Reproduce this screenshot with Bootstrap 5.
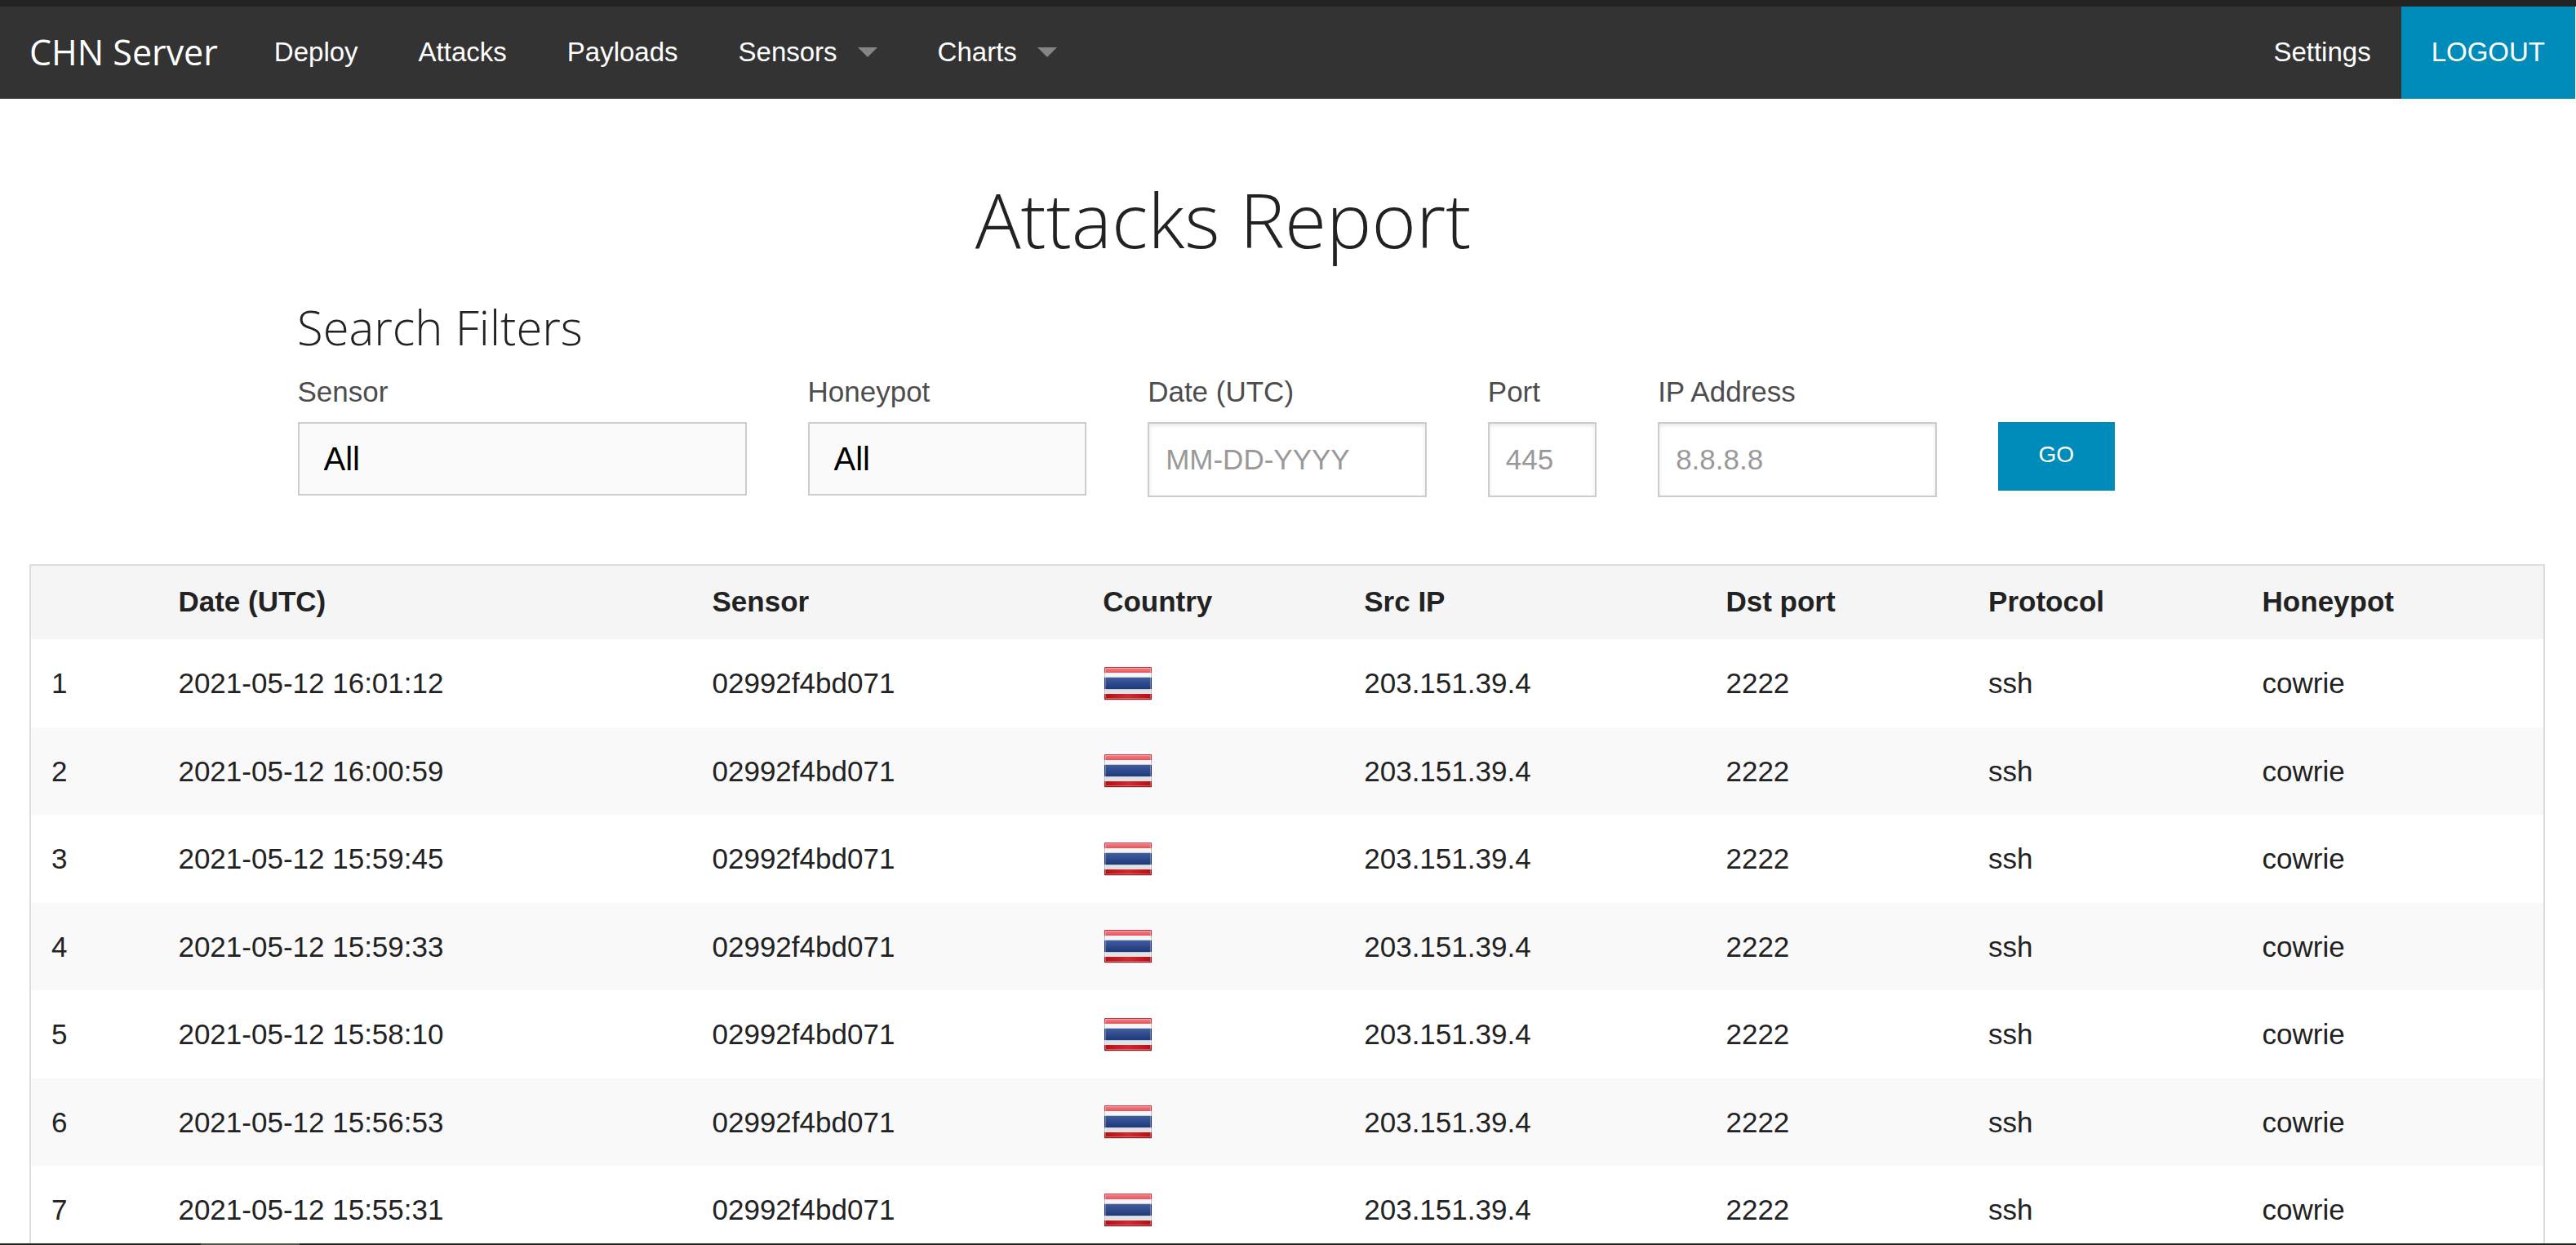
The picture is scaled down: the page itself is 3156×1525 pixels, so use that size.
<!DOCTYPE html>
<html lang="en">
<head>
<meta charset="utf-8">
<meta name="viewport" content="width=device-width, initial-scale=1">
<title>CHN Server - Attacks Report</title>
<link href="https://cdn.jsdelivr.net/npm/bootstrap@5.3.0/dist/css/bootstrap.min.css" rel="stylesheet">
<style>
  body { font-family: "Liberation Sans", Arial, sans-serif; font-size: 35px; color: #222; background: #fff; height: 100vh; overflow: hidden; }
  .page-body { padding-right: 2px; }
  .top-strip { height: 8px; background: #222; }
  .chn-nav { background: #333; --bs-navbar-padding-y: 0px; --bs-navbar-padding-x: 0px; margin-right: 1px; padding-bottom: 1px; font-size: 33px; line-height: 112px; }
  .chn-nav .navbar-brand { font-family: "Open Sans", sans-serif; font-size: 43px; line-height: 112px; color: #fff; padding: 0 32px 0 36px; margin: 0; }
  .chn-nav .navbar-nav .nav-link { color: #fff; padding: 0 37px; line-height: 112px; }
  .chn-nav .dropdown-toggle { display: flex; align-items: center; }
  .chn-nav .dropdown-toggle::after { margin-left: 25px; border-top: 12px solid #858585; border-left: 12px solid transparent; border-right: 12px solid transparent; border-bottom: 0; }
  .chn-nav .navbar-nav .logout { background: #008cba; margin-bottom: -1px; padding-bottom: 1px; }
  .filters { max-width: 2500px; padding: 83px 0 0; }
  .filters .row { --bs-gutter-x: 75px; margin: 0; }
  .report-title, .filters-title { font-family: "Open Sans", sans-serif; font-weight: 300; color: #222; }
  .report-title { font-size: 93px; line-height: 128px; margin: 0 0 29px; padding-right: 157px; }
  .filters-title { font-size: 58px; line-height: 80px; margin: 0 0 13px; padding: 0 37px; }
  .form-label { font-size: 35px; line-height: 52px; color: #4d4d4d; margin: 0 0 11px; }
  .form-select, .form-control { border: 2px solid #ccc; border-radius: 0; }
  .form-select { height: 90px; font-size: 40px; line-height: 60px; color: #000; background: #fafafa; padding: 0 30px; }
  .form-control { height: 92px; font-size: 35px; padding: 0 20px; box-shadow: inset 0 2px 5px rgba(0,0,0,.1); }
  .form-control::placeholder { color: #999; opacity: 1; }
  .go-btn { width: 143px; height: 84px; padding: 0 0 4px; margin-top: 63px; border: 0; border-radius: 0; background: #008cba; color: #fff; font-size: 28px; line-height: 40px; }
  .report-table { margin: 82px 36px 0; border: 2px solid #ddd; }
  .report-table .table { --bs-table-color: #222; margin: 0; table-layout: fixed; line-height: 45px; vertical-align: middle; }
  .report-table th, .report-table td { border: 0; padding: 0 25px 1px; height: 108px; vertical-align: middle; }
  .report-table tbody tr:nth-child(even) td { height: 107px; background: #f9f9f9; }
  .report-table thead th { height: 90px; padding-bottom: 4px; background: #f5f5f5; }
  .c-num { width: 5.05%; } .c-date { width: 21.25%; } .c-sensor { width: 15.55%; } .c-country { width: 10.4%; }
  .c-src { width: 14.4%; } .c-dst { width: 10.45%; } .c-proto { width: 10.9%; }
  .flag { width: 62px; height: 44px; display: block; }
  .taskbar-edge { height: 2px; background: linear-gradient(90deg, transparent 246px, #4e544c 246px, #4e544c 367px, transparent 367px), #20261f; }
</style>
</head>
<body>
<svg width="0" height="0" class="position-absolute" aria-hidden="true">
  <defs>
    <linearGradient id="g-top" x1="0" y1="0" x2="0" y2="1"><stop offset="0" stop-color="#f08a8f"/><stop offset="1" stop-color="#e8525b"/></linearGradient>
    <linearGradient id="g-blue" x1="0" y1="0" x2="0" y2="1"><stop offset="0" stop-color="#425d9c"/><stop offset="1" stop-color="#1d387c"/></linearGradient>
    <linearGradient id="g-red"><stop offset="0" stop-color="#b80d13"/><stop offset=".5" stop-color="#cf2b31"/><stop offset="1" stop-color="#b80d13"/></linearGradient>
    <symbol id="thai" viewBox="0 0 62 44">
      <rect x="2" y="3" width="58" height="40" fill="#000" opacity=".14"/>
      <rect x="2" y="2" width="58" height="40" fill="#f5f5f5"/>
      <rect x="2" y="2" width="58" height="7" fill="url(#g-top)"/>
      <rect x="2" y="15" width="58" height="14" fill="url(#g-blue)"/>
      <rect x="2" y="29" width="58" height="6" fill="#e2e2e2"/>
      <rect x="2" y="35" width="58" height="7" fill="url(#g-red)"/>
      <path d="M2 14.5H60M2 29.5H60" stroke="#c5cbd6"/>
      <path d="M2.5 9V2.5H59.5V9" fill="none" stroke="#c9303a"/>
      <path d="M2.5 15V29M59.5 15V29" stroke="#132c70"/>
      <path d="M2.5 9V15M59.5 9V15M2.5 29V35M59.5 29V35" stroke="#bbb"/>
      <path d="M2.5 35V41.5H59.5V35" fill="none" stroke="#96191d"/>
      <rect x="3.5" y="3.5" width="55" height="37" fill="none" stroke="#fff" opacity=".3"/>
    </symbol>
  </defs>
</svg>
<div class="top-strip"></div>
<nav class="navbar navbar-expand chn-nav" aria-label="Main">
  <a class="navbar-brand" href="#">CHN Server</a>
  <ul class="navbar-nav">
    <li class="nav-item"><a class="nav-link" href="#">Deploy</a></li>
    <li class="nav-item"><a class="nav-link" href="#">Attacks</a></li>
    <li class="nav-item"><a class="nav-link" href="#">Payloads</a></li>
    <li class="nav-item dropdown"><a class="nav-link dropdown-toggle" href="#">Sensors</a></li>
    <li class="nav-item dropdown"><a class="nav-link dropdown-toggle" href="#">Charts</a></li>
  </ul>
  <ul class="navbar-nav ms-auto">
    <li class="nav-item"><a class="nav-link" href="#">Settings</a></li>
    <li class="nav-item"><a class="nav-link logout" href="#">LOGOUT</a></li>
  </ul>
</nav>
<main class="page-body">
  <section class="container-fluid filters">
    <h1 class="report-title text-center">Attacks Report</h1>
    <h2 class="filters-title">Search Filters</h2>
    <form class="row align-items-start">
      <div class="col-3"><label class="form-label d-block" for="sensor">Sensor</label><select class="form-select" id="sensor"><option>All</option></select></div>
      <div class="col-2"><label class="form-label d-block" for="honeypot">Honeypot</label><select class="form-select" id="honeypot"><option>All</option></select></div>
      <div class="col-2"><label class="form-label d-block" for="date">Date (UTC)</label><input class="form-control" id="date" type="text" placeholder="MM-DD-YYYY"></div>
      <div class="col-1"><label class="form-label d-block" for="port">Port</label><input class="form-control" id="port" type="text" placeholder="445"></div>
      <div class="col-2"><label class="form-label d-block" for="ip">IP Address</label><input class="form-control" id="ip" type="text" placeholder="8.8.8.8"></div>
      <div class="col-2"><button class="btn go-btn" type="button">GO</button></div>
    </form>
  </section>
  <div class="report-table">
    <table class="table">
      <colgroup><col class="c-num"><col class="c-date"><col class="c-sensor"><col class="c-country"><col class="c-src"><col class="c-dst"><col class="c-proto"><col></colgroup>
      <thead><tr><th></th><th>Date (UTC)</th><th>Sensor</th><th>Country</th><th>Src IP</th><th>Dst port</th><th>Protocol</th><th>Honeypot</th></tr></thead>
      <tbody>
        <tr><td>1</td><td>2021-05-12 16:01:12</td><td>02992f4bd071</td><td><svg class="flag" role="img" aria-label="TH"><use href="#thai"/></svg></td><td>203.151.39.4</td><td>2222</td><td>ssh</td><td>cowrie</td></tr>
        <tr><td>2</td><td>2021-05-12 16:00:59</td><td>02992f4bd071</td><td><svg class="flag" role="img" aria-label="TH"><use href="#thai"/></svg></td><td>203.151.39.4</td><td>2222</td><td>ssh</td><td>cowrie</td></tr>
        <tr><td>3</td><td>2021-05-12 15:59:45</td><td>02992f4bd071</td><td><svg class="flag" role="img" aria-label="TH"><use href="#thai"/></svg></td><td>203.151.39.4</td><td>2222</td><td>ssh</td><td>cowrie</td></tr>
        <tr><td>4</td><td>2021-05-12 15:59:33</td><td>02992f4bd071</td><td><svg class="flag" role="img" aria-label="TH"><use href="#thai"/></svg></td><td>203.151.39.4</td><td>2222</td><td>ssh</td><td>cowrie</td></tr>
        <tr><td>5</td><td>2021-05-12 15:58:10</td><td>02992f4bd071</td><td><svg class="flag" role="img" aria-label="TH"><use href="#thai"/></svg></td><td>203.151.39.4</td><td>2222</td><td>ssh</td><td>cowrie</td></tr>
        <tr><td>6</td><td>2021-05-12 15:56:53</td><td>02992f4bd071</td><td><svg class="flag" role="img" aria-label="TH"><use href="#thai"/></svg></td><td>203.151.39.4</td><td>2222</td><td>ssh</td><td>cowrie</td></tr>
        <tr><td>7</td><td>2021-05-12 15:55:31</td><td>02992f4bd071</td><td><svg class="flag" role="img" aria-label="TH"><use href="#thai"/></svg></td><td>203.151.39.4</td><td>2222</td><td>ssh</td><td>cowrie</td></tr>
      </tbody>
    </table>
  </div>
</main>
<div class="taskbar-edge fixed-bottom"></div>
<script src="https://cdn.jsdelivr.net/npm/bootstrap@5.3.0/dist/js/bootstrap.bundle.min.js"></script>
</body>
</html>
